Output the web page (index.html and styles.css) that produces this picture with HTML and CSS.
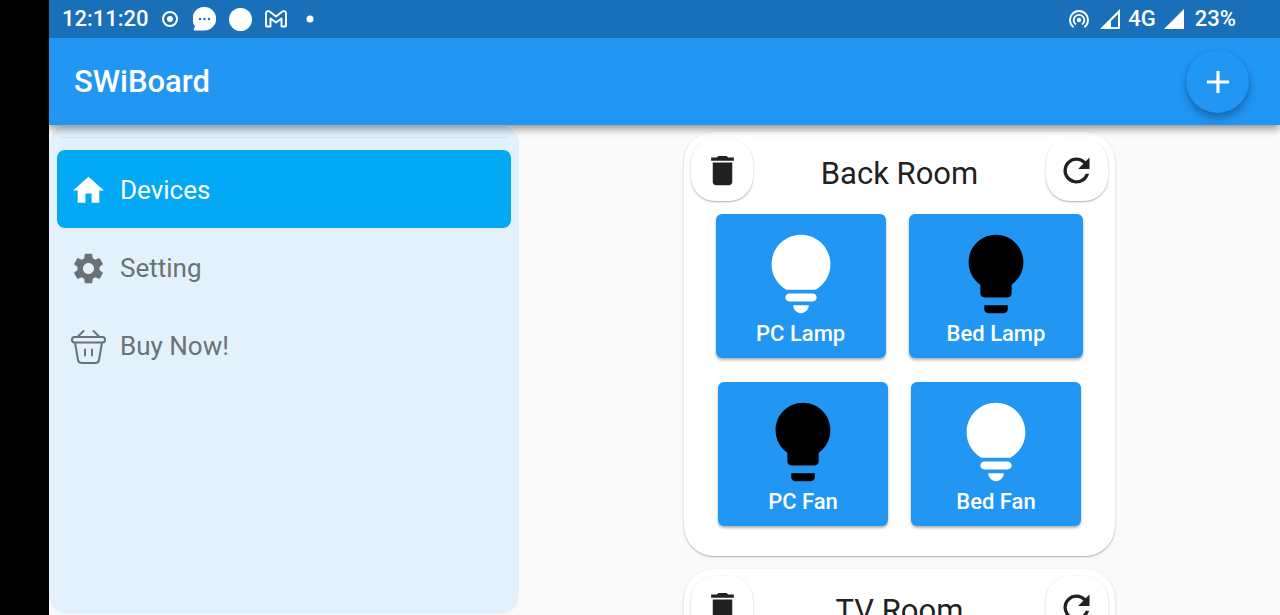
FILE: index.html
```html
<!DOCTYPE html>
<html lang="en">
<head>
<meta charset="utf-8">
<meta name="viewport" content="width=device-width, initial-scale=1">
<title>SWiBoard</title>
<link rel="stylesheet" href="styles.css">
</head>
<body>
<svg class="defs" aria-hidden="true">
  <symbol id="trash" viewBox="0 0 24 24"><path d="M6 19c0 1.1.9 2 2 2h8c1.1 0 2-.9 2-2V7H6v12zM19 4h-3.5l-1-1h-5l-1 1H5v2h14V4z"/></symbol>
  <symbol id="refresh" viewBox="0 0 24 24"><path d="M17.65 6.35A7.96 7.96 0 0 0 12 4a8 8 0 1 0 7.73 10h-2.08A6 6 0 1 1 12 6c1.66 0 3.14.69 4.22 1.78L13 11h7V4l-2.35 2.35z"/></symbol>
  <symbol id="bulb-on" viewBox="0 0 24 24"><path d="M12 22c1.1 0 2-.9 2-2h-4c0 1.100.9 2 2 2zM9 19h6c.55 0 1-.45 1-1s-.45-1-1-1H9c-.55 0-1 .45-1 1s.45 1 1 1zM12 2C7.860 2 4.500 5.360 4.500 9.500c0 3.820 2.660 5.860 3.770 6.500h7.460c1.110-.64 3.770-2.680 3.770-6.500C19.500 5.360 16.140 2 12 2z"/></symbol>
  <symbol id="bulb-off" viewBox="0 0 24 24"><path d="M9 21c0 .55.45 1 1 1h4c.55 0 1-.45 1-1v-1H9v1zM12 2C8.140 2 5 5.140 5 9c0 2.380 1.190 4.470 3 5.740V17c0 .55.45 1 1 1h6c.55 0 1-.45 1-1v-2.260c1.810-1.270 3-3.360 3-5.740 0-3.860-3.140-7-7-7z"/></symbol>
</svg>
<div class="shell">
  <div class="status">
    <div class="status-left">
      <span>12:11:20</span>
      <svg width="18" height="18" viewBox="0 0 18 18"><circle cx="8" cy="9" r="7" fill="none" stroke="currentColor" stroke-width="2"/><circle cx="8" cy="9" r="3" fill="currentColor"/></svg>
      <svg width="23" height="24" viewBox="0 0 23 24"><path d="M11.500 0A11.700 11.700 0 0 1 11.500 23.500H1.200Q.3 23.500.8 22.500L2 19A11.700 11.700 0 0 1 11.500 0z" fill="currentColor"/><g class="chat-dots"><circle cx="7" cy="12" r="1.200"/><circle cx="11.500" cy="12" r="1.200"/><circle cx="16" cy="12" r="1.200"/></g></svg>
      <svg width="23" height="23" viewBox="0 0 23 23"><circle cx="11.500" cy="11.500" r="11.500" fill="currentColor"/></svg>
      <svg width="22" height="18" viewBox="0 0 22 18"><path d="M1 3.500C1 1 3.500.5 5 1.800L11 6.500 17 1.800C18.500.5 21 1 21 3.500V15.500Q21 16.500 20 16.500H16.500V8.500L11 12.500 5.500 8.500V16.500H2Q1 16.500 1 15.500z" fill="none" stroke="currentColor" stroke-width="1.900" stroke-linejoin="round"/></svg>
      <svg width="20" height="20" viewBox="0 0 20 20"><circle cx="10" cy="10" r="3.500" fill="currentColor"/></svg>
    </div>
    <div class="status-right">
      <svg width="20" height="20" viewBox="0 0 20 20" fill="none" stroke="currentColor" stroke-width="1.900"><circle cx="10" cy="11" r="2.200" fill="currentColor" stroke="none"/><path d="M7 15.500a5.300 5.300 0 1 1 6 0M4.600 18.200a9 9 0 1 1 10.800 0"/></svg>
      <div class="mobile">
        <svg width="20" height="20" viewBox="0 0 20 20"><path d="M0 20L20 0V20zM11 18h7V5l-7 7z" fill="currentColor" fill-rule="evenodd"/></svg>
        <span>4G</span>
        <svg width="20" height="20" viewBox="0 0 20 20"><path d="M0 20L20 0V20z" fill="currentColor"/></svg>
      </div>
      <span>23%</span>
    </div>
  </div>

  <header class="appbar">
    <h1 class="app-title">SWiBoard</h1>
    <button class="fab" type="button" aria-label="Add"><svg width="38" height="38" viewBox="0 0 24 24"><path d="M19 13h-6v6h-2v-6H5v-2h6V5h2v6h6v2z" fill="currentColor"/></svg></button>
  </header>

  <div class="main">
    <nav class="sidebar">
      <hr class="divider">
      <a class="nav-item active" href="#devices"><svg class="nav-icon" viewBox="0 0 24 24" fill="currentColor"><path d="M10 20v-6h4v6h5v-8h3L12 3 2 12h3v8z"/></svg>Devices</a>
      <a class="nav-item" href="#setting"><svg class="nav-icon" viewBox="0 0 24 24" fill="currentColor"><path d="M19.140 12.940c.04-.3.060-.61.060-.94 0-.32-.02-.64-.07-.94l2.030-1.580c.18-.14.23-.41.120-.61l-1.920-3.320c-.12-.22-.37-.29-.59-.22l-2.390.96c-.5-.38-1.030-.7-1.620-.94l-.36-2.540c-.04-.24-.24-.41-.48-.41h-3.840c-.24 0-.43.17-.47.41l-.36 2.540c-.59.24-1.130.57-1.620.94l-2.390-.96c-.22-.08-.47 0-.59.22L2.740 8.870c-.12.21-.08.47.120.61l2.030 1.580c-.05.3-.09.63-.09.94s.02.64.070.94l-2.030 1.580c-.18.14-.23.41-.12.61l1.920 3.320c.12.22.37.29.59.22l2.390-.96c.5.38 1.030.7 1.620.94l.36 2.540c.05.24.24.41.48.41h3.840c.24 0 .44-.17.47-.41l.36-2.540c.59-.24 1.130-.56 1.620-.94l2.390.96c.22.080.47 0 .59-.22l1.920-3.320c.12-.22.070-.47-.12-.61l-2.010-1.580zM12 15.600c-1.980 0-3.600-1.620-3.600-3.600s1.620-3.600 3.600-3.600 3.600 1.620 3.600 3.600-1.620 3.600-3.600 3.600z"/></svg>Setting</a>
      <a class="nav-item" href="#buy"><svg class="nav-icon" viewBox="0 0 37 37" fill="none" stroke="currentColor" stroke-width="2" stroke-linecap="round" stroke-linejoin="round"><path d="M13.500 3L8 8.500M23.500 3L29 8.500M4.500 9H32.500Q35 9 35 11.700 35 14.500 32.500 14.500H4.500Q2 14.500 2 11.700 2 9 4.500 9zM5 14.500L8 32Q8.500 35 12 35H25Q28.500 35 29 32L32 14.500M15 21.500V27.500M22 21.500V27.500"/></svg>Buy Now!</a>
    </nav>

    <main class="rooms">
      <section class="card">
        <div class="card-head">
          <button class="round" type="button" aria-label="Delete Back Room"><svg><use href="#trash"/></svg></button>
          <h2 class="room">Back Room</h2>
          <button class="round" type="button" aria-label="Refresh Back Room"><svg><use href="#refresh"/></svg></button>
        </div>
        <div class="tiles">
          <button class="tile" type="button"><svg><use href="#bulb-on"/></svg>PC Lamp</button>
          <button class="tile off" type="button"><svg><use href="#bulb-off"/></svg>Bed Lamp</button>
        </div>
        <div class="tiles">
          <button class="tile off" type="button"><svg><use href="#bulb-off"/></svg>PC Fan</button>
          <button class="tile" type="button"><svg><use href="#bulb-on"/></svg>Bed Fan</button>
        </div>
      </section>
      <section class="card">
        <div class="card-head">
          <button class="round" type="button" aria-label="Delete TV Room"><svg><use href="#trash"/></svg></button>
          <h2 class="room">TV Room</h2>
          <button class="round" type="button" aria-label="Refresh TV Room"><svg><use href="#refresh"/></svg></button>
        </div>
      </section>
    </main>
  </div>
</div>
</body>
</html>
```
FILE: styles.css
```css
* { box-sizing: border-box; }
body {
  margin: 0;
  background: #000;
  font-family: Roboto, "Liberation Sans", sans-serif;
}
button { border: 0; padding: 0; font: inherit; cursor: pointer; }
svg { display: block; flex: none; }
.defs { display: none; }

.shell {
  display: flex;
  flex-direction: column;
  height: 100vh;
  margin-left: 49px;
  background: #fafafa;
}

.status {
  display: flex;
  align-items: center;
  justify-content: space-between;
  padding: 6px 44px 6px 13px;
  background: #1a70b8;
  color: #fff;
  font-size: 22px;
  font-weight: 500;
  line-height: 26px;
}
.status-left { display: flex; align-items: center; gap: 13px; }
.status-right { display: flex; align-items: center; gap: 11px; }
.mobile { display: flex; align-items: center; gap: 8px; }
.chat-dots { fill: #1a70b8; }

.appbar {
  display: flex;
  align-items: center;
  justify-content: space-between;
  padding: 12px 31px 12px 25px;
  background: #2196f3;
  color: #fff;
  box-shadow: 0 4px 8px rgba(0, 0, 0, 0.4);
  clip-path: inset(0 0 -20px 0);
  z-index: 1;
}
.app-title { margin: 0; font-size: 31px; font-weight: 500; line-height: 38px; }
.fab {
  display: grid;
  place-items: center;
  width: 63px;
  height: 63px;
  border-radius: 50%;
  background: #2196f3;
  color: #fff;
  box-shadow: 0 5px 9px rgba(0, 0, 0, 0.3), 0 0 2px rgba(0, 0, 0, 0.1);
}

.main { display: flex; flex: 1; min-height: 0; }
.sidebar {
  flex: none;
  width: 470px;
  padding: 11px 8px;
  margin: 1px 0;
  border-radius: 18px;
  background: #e3f1fc;
}
.divider { height: 1px; margin: 0 5px 12px; border: 0; background: #cfdfea; }
.nav-item {
  display: flex;
  align-items: center;
  gap: 13px;
  height: 78px;
  padding: 2px 13px 0;
  border-radius: 8px;
  color: #6a7278;
  font-size: 26px;
  text-decoration: none;
}
.nav-item.active { background: #03a9f4; color: #fff; }
.nav-icon { width: 37px; height: 37px; }

.rooms {
  display: flex;
  flex: 1;
  flex-direction: column;
  align-items: center;
  gap: 13px;
  padding-top: 7px;
  overflow-y: auto;
  scrollbar-width: none;
}
.card {
  flex: none;
  width: 431px;
  padding: 7px 7px 30px;
  border-radius: 30px;
  background: #fff;
  box-shadow: 0 1px 1px rgba(0, 0, 0, 0.2), 0 1px 3px rgba(0, 0, 0, 0.14);
}
.card-head { display: flex; justify-content: space-between; margin-bottom: 5px; }
.room { margin: 0; color: #212121; font-size: 31px; font-weight: 400; line-height: 70px; }
.round {
  display: grid;
  place-items: center;
  width: 62px;
  height: 62px;
  border-radius: 24px;
  background: #fff;
  box-shadow: 0 1px 1px rgba(0, 0, 0, 0.2), 0 1px 3px rgba(0, 0, 0, 0.14);
}
.round svg { width: 39px; height: 39px; fill: #212121; }

.tiles { display: flex; justify-content: center; gap: 23px; }
.tiles + .tiles { margin-top: 24px; }
.tile {
  display: flex;
  flex-direction: column;
  align-items: center;
  padding: 13px 38px 11px;
  border-radius: 6px;
  background: #2196f3;
  color: #fff;
  font-size: 22px;
  font-weight: 500;
  line-height: 26px;
  box-shadow: 0 2px 3px rgba(0, 0, 0, 0.3);
}
.tile svg { width: 94px; height: 94px; fill: #fff; }
.tile.off svg { fill: #000; }
```
